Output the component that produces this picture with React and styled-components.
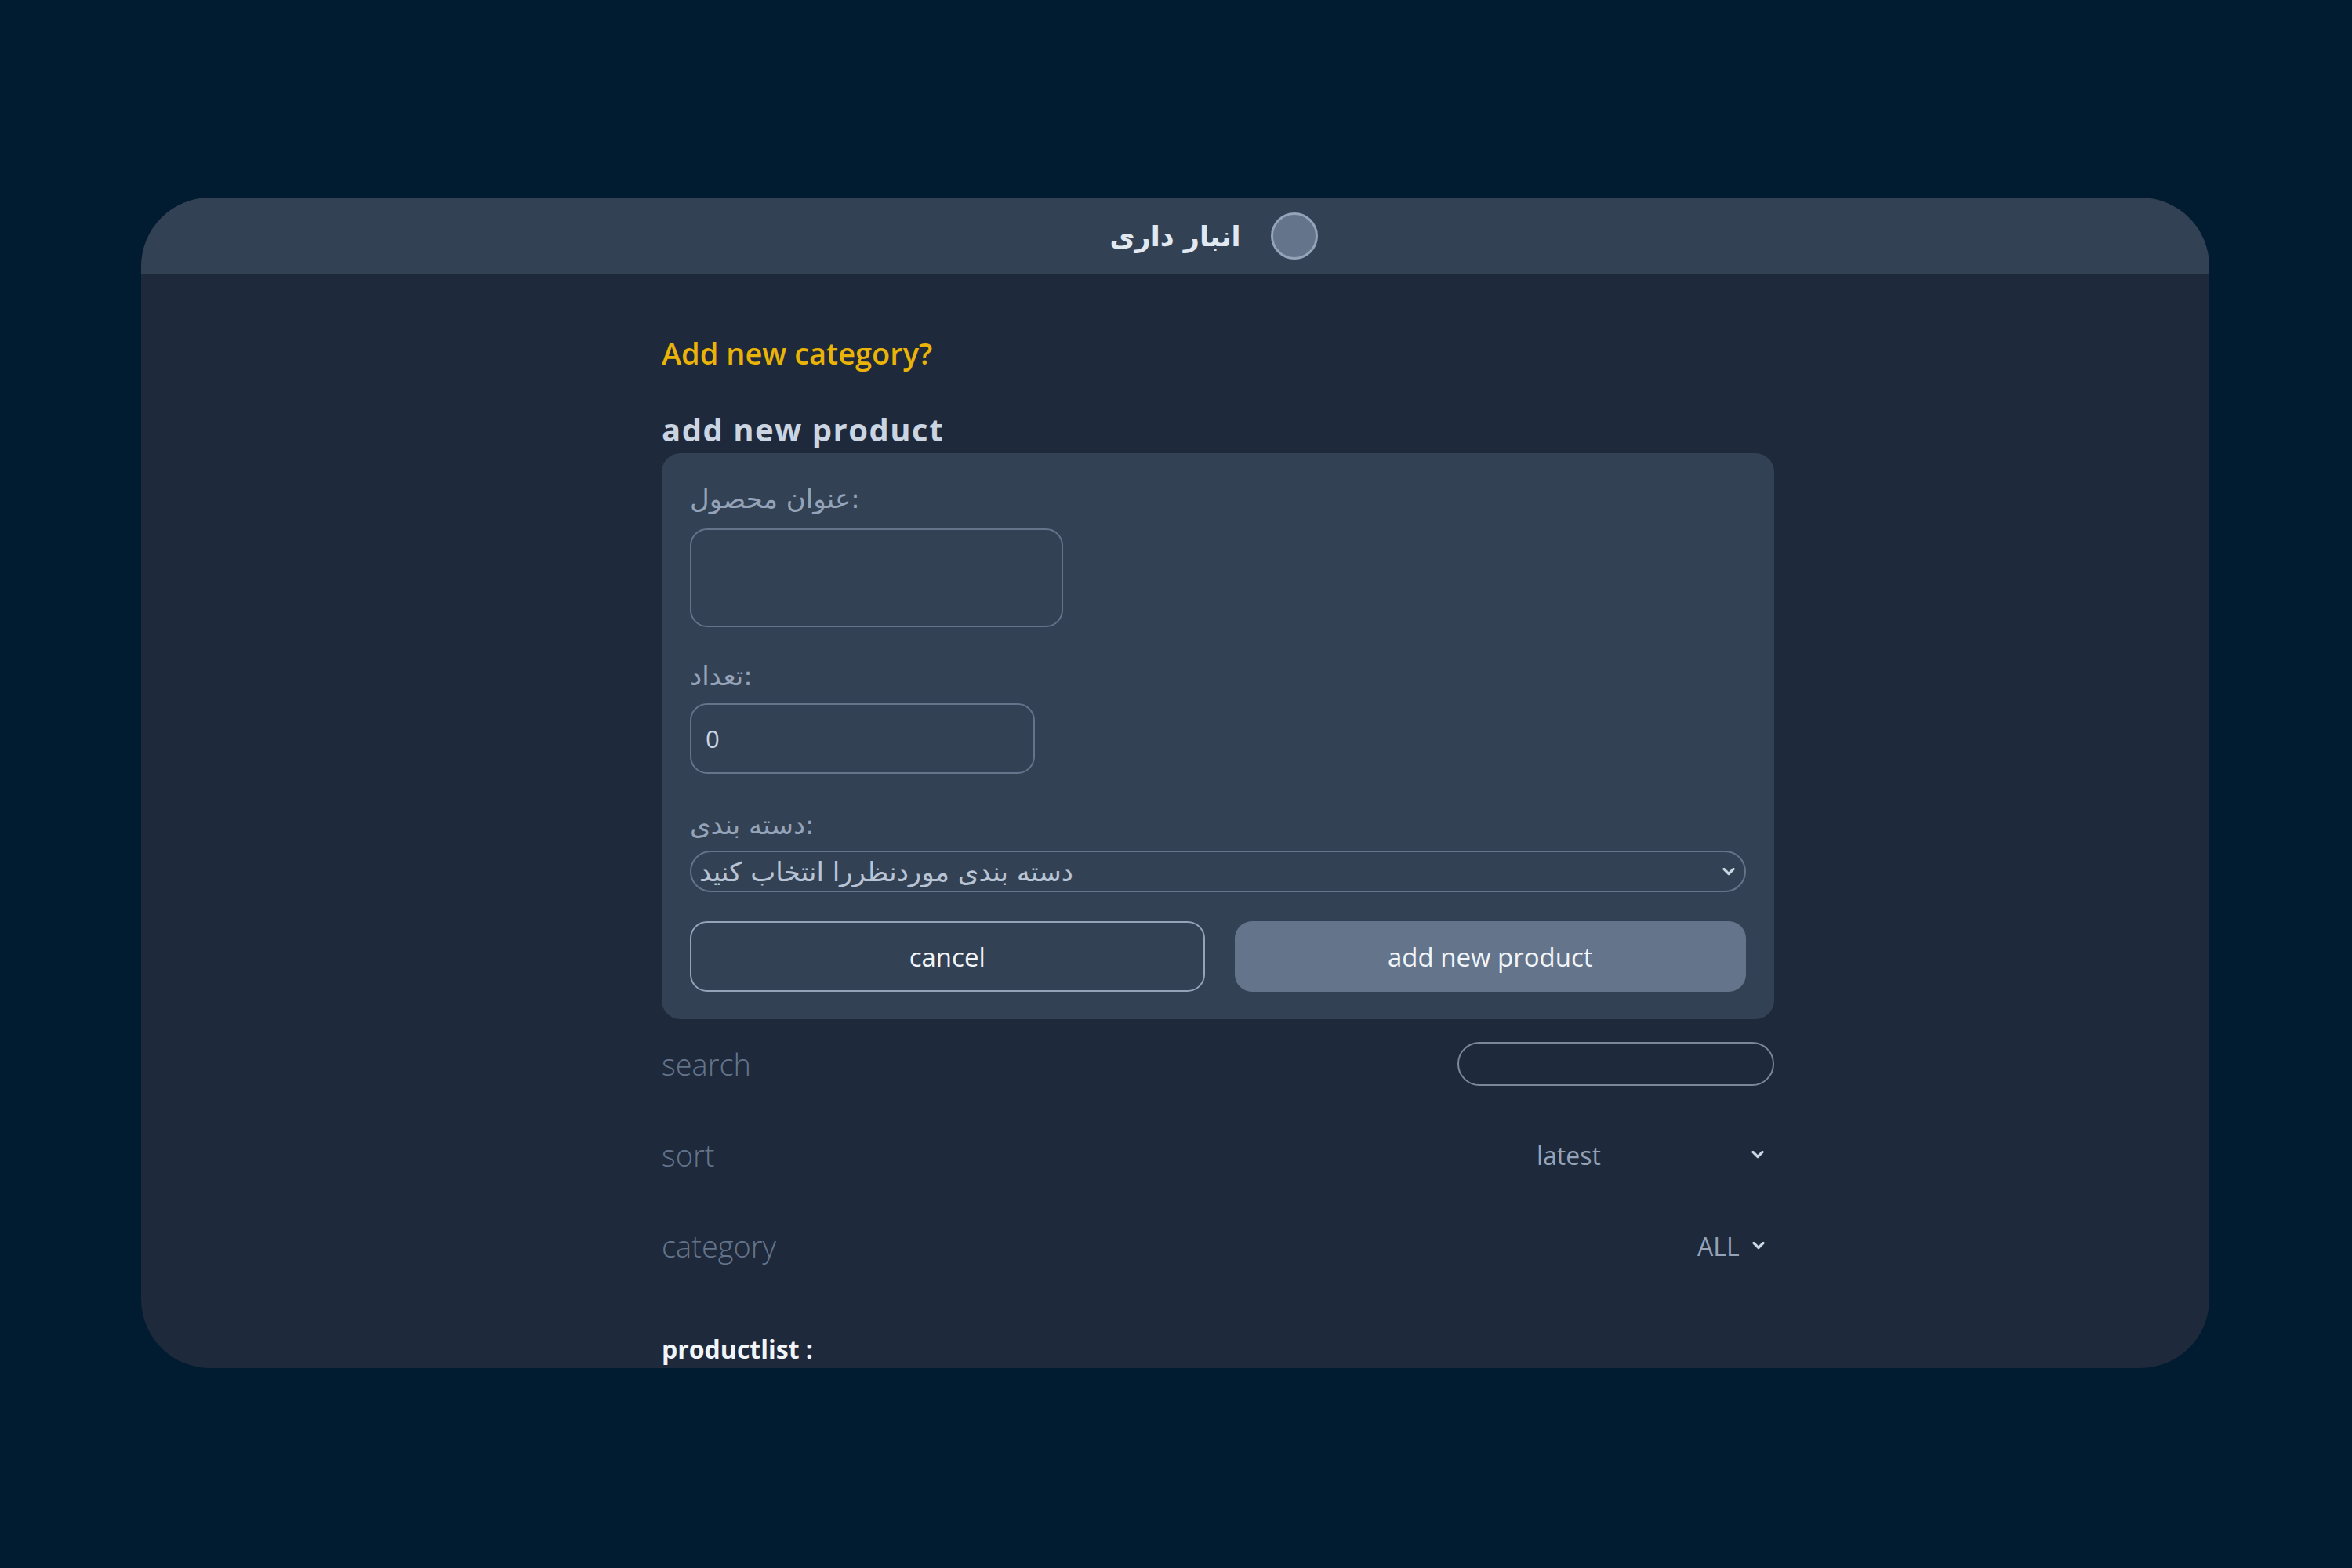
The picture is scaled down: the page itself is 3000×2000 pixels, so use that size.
import React from "react";
import styled, { createGlobalStyle } from "styled-components";

const GlobalStyle = createGlobalStyle`
  html, body {
    margin: 0;
    padding: 0;
    background: #011b30;
  }
  body {
    font-family: "Open Sans", "DejaVu Sans", sans-serif;
  }
  * { box-sizing: border-box; }
`;

const Page = styled.div`
  width: 3000px;
  min-height: 2000px;
  padding: 252px 182px 0 180px;
  background: #011b30;
`;

const Card = styled.div`
  width: 2638px;
  background: #1e293b;
  border-radius: 88px;
  overflow: hidden;
`;

const Header = styled.header`
  height: 98px;
  background: #334155;
  display: grid;
  grid-template-columns: 1fr auto 1fr;
  align-items: center;
`;

const HeaderTitle = styled.h1`
  grid-column: 2;
  margin: 0;
  font-family: "DejaVu Sans", sans-serif;
  font-weight: 700;
  font-size: 35px;
  color: #e2e8f0;
  line-height: 1;
  padding-top: 2px;
`;

const Badge = styled.span`
  grid-column: 3;
  justify-self: start;
  margin-left: 38px;
  width: 60px;
  height: 60px;
  border-radius: 50%;
  background: #64748b;
  border: 3px solid #94a3b8;
`;

const Body = styled.main`
  padding: 74px 555px 2px 664px;
`;

const CategoryLink = styled.a`
  display: block;
  font-size: 38px;
  line-height: 52px;
  font-weight: 600;
  color: #eab308;
  cursor: pointer;
`;

const SectionTitle = styled.h2`
  margin: 46px 0 0;
  font-size: 40px;
  letter-spacing: 1.5px;
  line-height: 52px;
  font-weight: 700;
  color: #cbd5e1;
`;

const Form = styled.form`
  margin-top: 4px;
  background: #334155;
  border-radius: 24px;
  padding: 36px 36px 35px;
  display: flex;
  flex-direction: column;
`;

const Field = styled.div`
  display: flex;
  flex-direction: column;
  align-items: flex-start;
  margin-top: ${(p) => p.$gap || 0}px;
`;

const Label = styled.label`
  font-family: "DejaVu Sans", sans-serif;
  font-size: 34px;
  line-height: 44px;
  color: #94a3b8;
  margin-bottom: ${(p) => p.$mb}px;
`;

const TextArea = styled.textarea`
  width: 476px;
  height: 126px;
  resize: none;
  background: transparent;
  border: 2px solid #64748b;
  border-radius: 22px;
  outline: none;
  color: #cbd5e1;
  font-size: 30px;
  padding: 12px 18px;
  font-family: inherit;
`;

const TextInput = styled.input`
  width: ${(p) => p.$w}px;
  height: ${(p) => p.$h}px;
  background: transparent;
  border: 2px solid ${(p) => p.$border || "#64748b"};
  border-radius: ${(p) => p.$r}px;
  outline: none;
  color: #cbd5e1;
  font-size: 31px;
  padding: 0 18px;
  font-family: inherit;
`;

const SelectWrap = styled.div`
  position: relative;
  width: ${(p) => (p.$w ? `${p.$w}px` : "100%")};
  height: ${(p) => p.$h}px;
`;

const Select = styled.select`
  appearance: none;
  -webkit-appearance: none;
  width: 100%;
  height: 100%;
  background: transparent;
  border: ${(p) => (p.$bordered ? "2px solid #64748b" : "none")};
  border-radius: ${(p) => (p.$bordered ? "27px" : "0")};
  outline: none;
  color: ${(p) => p.$color || "#94a3b8"};
  font-size: ${(p) => p.$fs}px;
  font-family: ${(p) => (p.$arabic ? `"DejaVu Sans", sans-serif` : `"Open Sans", sans-serif`)};
  padding: 0 40px 0 ${(p) => p.$pl}px;
`;

const Chevron = styled.svg`
  position: absolute;
  right: ${(p) => p.$right}px;
  top: 50%;
  transform: translateY(-50%);
  pointer-events: none;
`;

const ButtonRow = styled.div`
  margin-top: 37px;
  display: flex;
  gap: 38px;
`;

const Button = styled.button`
  flex: 1;
  height: 90px;
  border-radius: 22px;
  font-family: "Open Sans", sans-serif;
  font-size: 33px;
  color: #f1f5f9;
  cursor: pointer;
  background: ${(p) => (p.$primary ? "#64748b" : "transparent")};
  border: ${(p) => (p.$primary ? "none" : "2px solid #94a3b8")};
`;

const Filters = styled.div`
  margin-top: 29px;
  display: flex;
  flex-direction: column;
  gap: 60px;
`;

const FilterRow = styled.div`
  height: 56px;
  display: flex;
  align-items: center;
  justify-content: space-between;
`;

const FilterLabel = styled.span`
  font-size: 38px;
  font-weight: 300;
  color: #64748b;
`;

const ListTitle = styled.p`
  margin: 82px 0 0;
  font-size: 32px;
  line-height: 44px;
  font-weight: 700;
  color: #f1f5f9;
`;

const ChevronIcon = ({ right, color = "#cbd5e1" }) => (
  <Chevron $right={right} width="16" height="11" viewBox="0 0 16 11">
    <path d="M2 2 L8 8 L14 2" fill="none" stroke={color} strokeWidth="3.2" strokeLinecap="round" strokeLinejoin="round" />
  </Chevron>
);

export default function App() {
  return (
    <>
      <GlobalStyle />
      <Page>
        <Card>
          <Header>
            <HeaderTitle>انبار داری</HeaderTitle>
            <Badge />
          </Header>
          <Body>
            <CategoryLink>Add new category?</CategoryLink>
            <SectionTitle>add new product</SectionTitle>
            <Form>
              <Field>
                <Label $mb={16}>عنوان محصول:</Label>
                <TextArea />
              </Field>
              <Field $gap={40}>
                <Label $mb={13}>تعداد:</Label>
                <TextInput type="text" defaultValue="0" $w={440} $h={90} $r={22} />
              </Field>
              <Field $gap={43}>
                <Label $mb={11}>دسته بندی:</Label>
                <SelectWrap $h={53}>
                  <Select $bordered $arabic $fs={34} $pl={10} $color="#b8c3d3" defaultValue="">
                    <option value="">دسته بندی موردنظررا انتخاب کنید</option>
                  </Select>
                  <ChevronIcon right={14} />
                </SelectWrap>
              </Field>
              <ButtonRow>
                <Button type="button">cancel</Button>
                <Button type="button" $primary>add new product</Button>
              </ButtonRow>
            </Form>
            <Filters>
              <FilterRow>
                <FilterLabel>search</FilterLabel>
                <TextInput type="text" $w={404} $h={56} $r={28} $border="#7b879b" />
              </FilterRow>
              <FilterRow>
                <FilterLabel>sort</FilterLabel>
                <SelectWrap $w={315} $h={56}>
                  <Select $fs={32} $pl={12} defaultValue="latest">
                    <option value="latest">latest</option>
                    <option value="earliest">earliest</option>
                  </Select>
                  <ChevronIcon right={13} />
                </SelectWrap>
              </FilterRow>
              <FilterRow>
                <FilterLabel>category</FilterLabel>
                <SelectWrap $w={103} $h={56}>
                  <Select $fs={32} $pl={5} defaultValue="all">
                    <option value="all">ALL</option>
                  </Select>
                  <ChevronIcon right={12} />
                </SelectWrap>
              </FilterRow>
            </Filters>
            <ListTitle>productlist :</ListTitle>
          </Body>
        </Card>
      </Page>
    </>
  );
}
